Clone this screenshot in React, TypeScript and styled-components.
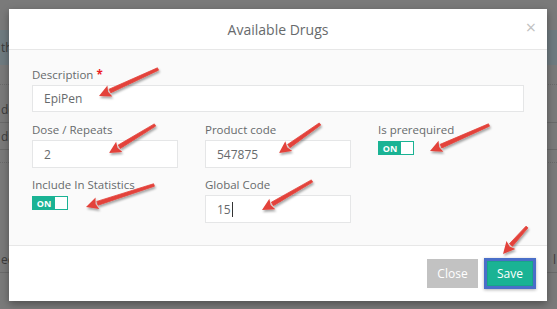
import React from 'react';
import styled, { createGlobalStyle } from 'styled-components';

const GlobalStyle = createGlobalStyle`
  html, body {
    margin: 0;
    padding: 0;
    background: #7a7a7a;
  }
  * {
    box-sizing: border-box;
  }
`;

const Page = styled.div`
  position: relative;
  width: 557px;
  height: 309px;
  overflow: hidden;
  font-family: 'Open Sans', 'DejaVu Sans', sans-serif;
  background: #7a7a7a;
`;

/* faded page behind the modal */
const BgTable = styled.div`
  display: flex;
  flex-direction: column;
  padding-top: 30px;
`;

const BgRow = styled.div<{ $h: number; $band?: boolean; $line?: 'solid' | 'dotted' }>`
  height: ${(p) => p.$h}px;
  display: flex;
  align-items: center;
  justify-content: space-between;
  background: ${(p) => (p.$band ? '#6f7b80' : 'transparent')};
  border-bottom: ${(p) => (p.$line ? `1px ${p.$line} #6a6a6a` : 'none')};
  color: #3c3c3c;
  font-size: 12px;
`;

const BgText = styled.span`
  white-space: nowrap;
  padding: 0 1px;
`;

const Overlay = styled.div`
  position: absolute;
  inset: 0;
  padding: 9px 10px 8px 9px;
`;

const Modal = styled.div`
  width: 538px;
  height: 292px;
  background: #fff;
  display: flex;
  flex-direction: column;
  box-shadow: 0 3px 8px rgba(0, 0, 0, 0.35);
`;

const Header = styled.div`
  position: relative;
  height: 41px;
  display: flex;
  align-items: center;
  justify-content: center;
  border-bottom: 1px solid #e7e7e7;
`;

const Title = styled.h4`
  margin: 0;
  font-size: 14px;
  font-weight: 400;
  color: #676a6c;
`;

const CloseX = styled.span`
  position: absolute;
  right: 11px;
  top: 9px;
  font-size: 18px;
  color: #c2c2c2;
  line-height: 1;
`;

const Body = styled.div`
  flex: 1;
  background: #fafafa;
  padding: 16px 23px 0 23px;
  display: flex;
  flex-direction: column;
  gap: 9px;
`;

const Row = styled.div`
  display: grid;
  grid-template-columns: 146px 146px 1fr;
  column-gap: 27px;
  row-gap: 8px;
`;

const Group = styled.div`
  display: flex;
  flex-direction: column;
  align-items: flex-start;
`;

const Label = styled.label`
  font-size: 11.5px;
  font-weight: 500;
  color: #676a6c;
  line-height: 17px;
  margin-bottom: 2px;
`;

const Required = styled.span`
  color: #ed1c24;
  font-weight: 700;
  margin-left: 3px;
`;

const Input = styled.div<{ $full?: boolean }>`
  width: ${(p) => (p.$full ? '492px' : '146px')};
  height: ${(p) => (p.$full ? '27px' : '28px')};
  background: #fff;
  border: 1px solid #e5e6e7;
  padding: 0 11px;
  display: flex;
  align-items: center;
  font-size: 12px;
  color: #676a6c;
`;

const Caret = styled.span`
  display: inline-block;
  width: 1px;
  height: 15px;
  background: #333;
  margin-left: 1px;
`;

const Toggle = styled.div`
  width: 36px;
  height: 14px;
  border: 1px solid #1ab394;
  display: flex;
  background: #fff;
  margin-top: 1px;
`;

const ToggleOn = styled.span`
  width: 22px;
  background: #1ab394;
  color: #fff;
  font-size: 9px;
  font-weight: 700;
  display: flex;
  align-items: center;
  justify-content: center;
  line-height: 1;
`;

const Footer = styled.div`
  height: 56px;
  border-top: 1px solid #e7e7e7;
  display: flex;
  align-items: center;
  justify-content: flex-end;
  gap: 6px;
  padding-right: 11px;
`;

const Button = styled.button<{ $primary?: boolean }>`
  font-family: 'Open Sans', 'DejaVu Sans', sans-serif;
  font-size: 12px;
  color: #fff;
  cursor: pointer;
  ${(p) =>
    p.$primary
      ? `
    width: 52px;
    height: 31px;
    background: #1ab394;
    border: 3px solid #4a6fc9;
    box-shadow: inset 0 0 0 1px #18a689, 0 1px 3px rgba(0,0,0,0.3);
  `
      : `
    width: 51px;
    height: 29px;
    background: #c2c2c2;
    border: none;
  `}
`;

const ArrowLayer = styled.svg`
  position: absolute;
  inset: 0;
  pointer-events: none;
`;

type ArrowSpec = [number, number, number, number];

const arrows: ArrowSpec[] = [
  [158, 69, 99, 96],
  [155, 125, 109, 153],
  [320, 124, 279, 153],
  [489, 125, 430, 151],
  [154, 185, 86, 207],
  [312, 181, 262, 210],
  [527, 227, 503, 254],
];

const Arrow = ({ spec }: { spec: ArrowSpec }) => {
  const [x1, y1, x2, y2] = spec;
  const dx = x2 - x1;
  const dy = y2 - y1;
  const len = Math.hypot(dx, dy);
  const ux = dx / len;
  const uy = dy / len;
  const px = -uy;
  const py = ux;
  const headLen = 12;
  const headW = 6;
  const bx = x2 - ux * headLen;
  const by = y2 - uy * headLen;
  const shaft = [
    [x1 + px * 1.3, y1 + py * 1.3],
    [bx + px * 2, by + py * 2],
    [bx - px * 2, by - py * 2],
    [x1 - px * 1.3, y1 - py * 1.3],
  ]
    .map((p) => p.join(','))
    .join(' ');
  const head = [
    [x2, y2],
    [bx + px * headW, by + py * headW],
    [bx + ux * 2, by + uy * 2],
    [bx - px * headW, by - py * headW],
  ]
    .map((p) => p.join(','))
    .join(' ');
  return (
    <g filter="url(#arrowShadow)">
      <polygon points={shaft} fill="#e3433b" strokeLinejoin="round" stroke="#e3433b" strokeWidth={0.8} />
      <polygon points={head} fill="#e3433b" />
    </g>
  );
};

export default function App() {
  return (
    <>
      <GlobalStyle />
      <Page>
        <BgTable>
          <BgRow $h={35} $band>
            <BgText>th</BgText>
          </BgRow>
          <BgRow $h={20} $line="dotted" />
          <BgRow $h={12} />
          <BgRow $h={26} $line="solid">
            <BgText>do</BgText>
          </BgRow>
          <BgRow $h={27} $line="solid">
            <BgText>di</BgText>
          </BgRow>
          <BgRow $h={13} $line="dotted" />
          <BgRow $h={84} />
          <BgRow $h={26} $line="solid">
            <BgText>ed</BgText>
            <BgText>l</BgText>
          </BgRow>
        </BgTable>

        <Overlay>
          <Modal>
            <Header>
              <Title>Available Drugs</Title>
              <CloseX>×</CloseX>
            </Header>
            <Body>
              <Group>
                <Label>
                  Description<Required>*</Required>
                </Label>
                <Input $full>EpiPen</Input>
              </Group>
              <Row>
                <Group>
                  <Label>Dose / Repeats</Label>
                  <Input>2</Input>
                </Group>
                <Group>
                  <Label>Product code</Label>
                  <Input>547875</Input>
                </Group>
                <Group>
                  <Label>Is prerequired</Label>
                  <Toggle>
                    <ToggleOn>ON</ToggleOn>
                  </Toggle>
                </Group>
                <Group>
                  <Label>Include In Statistics</Label>
                  <Toggle>
                    <ToggleOn>ON</ToggleOn>
                  </Toggle>
                </Group>
                <Group>
                  <Label>Global Code</Label>
                  <Input>
                    15
                    <Caret />
                  </Input>
                </Group>
              </Row>
            </Body>
            <Footer>
              <Button>Close</Button>
              <Button $primary>Save</Button>
            </Footer>
          </Modal>
        </Overlay>

        <ArrowLayer width="557" height="309" viewBox="0 0 557 309">
          <defs>
            <filter id="arrowShadow" x="-20%" y="-20%" width="140%" height="140%">
              <feDropShadow dx="1" dy="2" stdDeviation="1.2" floodColor="#000" floodOpacity="0.35" />
            </filter>
          </defs>
          {arrows.map((a, i) => (
            <Arrow key={i} spec={a} />
          ))}
        </ArrowLayer>
      </Page>
    </>
  );
}
